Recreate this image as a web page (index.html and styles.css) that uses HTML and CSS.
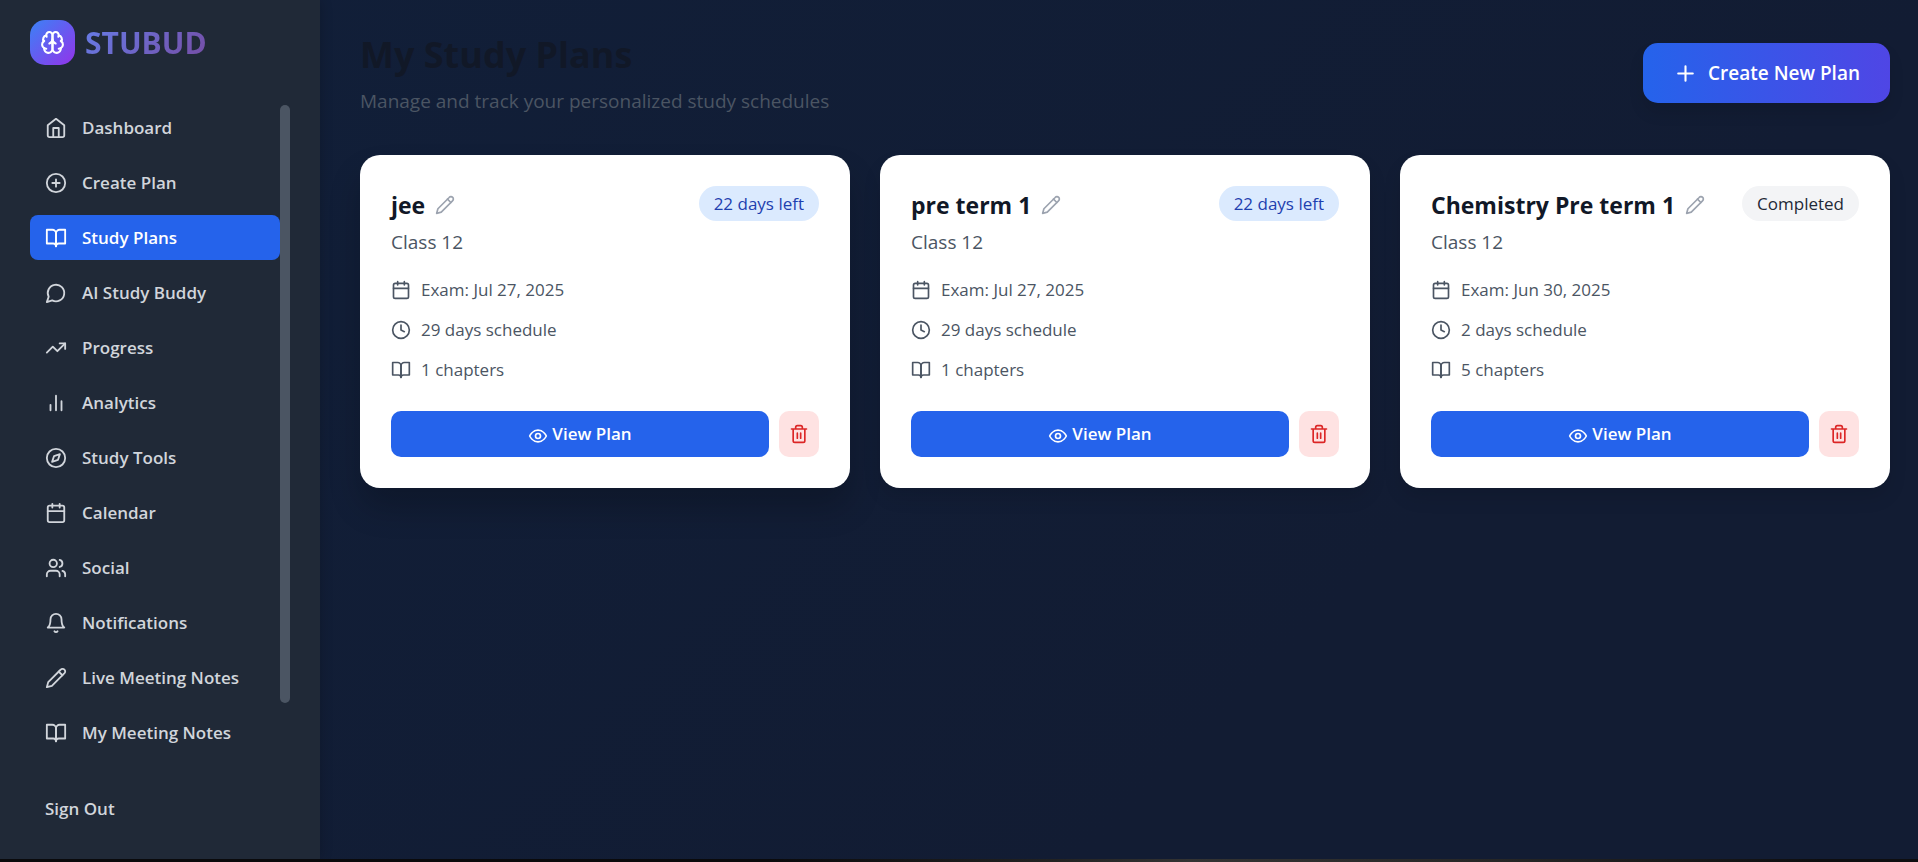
FILE: index.html
```html
<!DOCTYPE html>
<html lang="en">
<head>
<meta charset="utf-8">
<meta name="viewport" content="width=device-width, initial-scale=1">
<title>My Study Plans - STUBUD</title>
<link rel="stylesheet" href="styles.css">
</head>
<body>
<svg class="sprite" aria-hidden="true">
  <symbol id="i-brain" viewBox="0 0 24 24"><path d="M12 5a3 3 0 1 0-5.997.125 4 4 0 0 0-2.526 5.77 4 4 0 0 0 .556 6.588A4 4 0 1 0 12 18Z"/><path d="M12 5a3 3 0 1 1 5.997.125 4 4 0 0 1 2.526 5.77 4 4 0 0 1-.556 6.588A4 4 0 1 1 12 18Z"/><path d="M15 13a4.5 4.5 0 0 1-3-4 4.5 4.5 0 0 1-3 4"/><path d="M17.599 6.5a3 3 0 0 0 .399-1.375"/><path d="M6.003 5.125A3 3 0 0 0 6.401 6.5"/><path d="M3.477 10.896a4 4 0 0 1 .585-.396"/><path d="M19.938 10.5a4 4 0 0 1 .585.396"/><path d="M6 18a4 4 0 0 1-1.967-.516"/><path d="M19.967 17.484A4 4 0 0 1 18 18"/></symbol>
  <symbol id="i-home" viewBox="0 0 24 24"><path d="m3 9 9-7 9 7v11a2 2 0 0 1-2 2H5a2 2 0 0 1-2-2z"/><path d="M9 22V12h6v10"/></symbol>
  <symbol id="i-plus-circle" viewBox="0 0 24 24"><circle cx="12" cy="12" r="10"/><path d="M8 12h8M12 8v8"/></symbol>
  <symbol id="i-book" viewBox="0 0 24 24"><path d="M2 3h6a4 4 0 0 1 4 4v14a3 3 0 0 0-3-3H2z"/><path d="M22 3h-6a4 4 0 0 0-4 4v14a3 3 0 0 1 3-3h7z"/></symbol>
  <symbol id="i-message" viewBox="0 0 24 24"><path d="M7.9 20A9 9 0 1 0 4 16.1L2 22Z"/></symbol>
  <symbol id="i-trend" viewBox="0 0 24 24"><path d="m22 7-8.500 8.500-5-5L2 17"/><path d="M16 7h6v6"/></symbol>
  <symbol id="i-bars" viewBox="0 0 24 24"><path d="M18 20V10M12 20V4M6 20v-6"/></symbol>
  <symbol id="i-compass" viewBox="0 0 24 24"><circle cx="12" cy="12" r="10"/><path d="m16.240 7.760-2.120 6.360-6.360 2.120 2.120-6.360z"/></symbol>
  <symbol id="i-calendar" viewBox="0 0 24 24"><rect x="3" y="4" width="18" height="18" rx="2"/><path d="M8 2v4M16 2v4M3 10h18"/></symbol>
  <symbol id="i-users" viewBox="0 0 24 24"><path d="M16 21v-2a4 4 0 0 0-4-4H6a4 4 0 0 0-4 4v2"/><circle cx="9" cy="7" r="4"/><path d="M22 21v-2a4 4 0 0 0-3-3.870M16 3.130a4 4 0 0 1 0 7.750"/></symbol>
  <symbol id="i-bell" viewBox="0 0 24 24"><path d="M6 8a6 6 0 0 1 12 0c0 7 3 9 3 9H3s3-2 3-9"/><path d="M10.300 21a1.940 1.940 0 0 0 3.400 0"/></symbol>
  <symbol id="i-pencil" viewBox="0 0 24 24"><path d="M17 3a2.850 2.830 0 1 1 4 4L7.500 20.500 2 22l1.500-5.500Z"/><path d="m15 5 4 4"/></symbol>
  <symbol id="i-clock" viewBox="0 0 24 24"><circle cx="12" cy="12" r="10"/><path d="M12 6v6l4 2"/></symbol>
  <symbol id="i-eye" viewBox="0 0 24 24"><path d="M2 12s3.500-7 10-7 10 7 10 7-3.500 7-10 7-10-7-10-7Z"/><circle cx="12" cy="12" r="3"/></symbol>
  <symbol id="i-trash" viewBox="0 0 24 24"><path d="M3 6h18M19 6v14a2 2 0 0 1-2 2H7a2 2 0 0 1-2-2V6M8 6V4a2 2 0 0 1 2-2h4a2 2 0 0 1 2 2v2M10 11v6M14 11v6"/></symbol>
  <symbol id="i-plus" viewBox="0 0 24 24"><path d="M5 12h14M12 5v14"/></symbol>
</svg>
<div class="app">
  <aside class="sidebar">
    <div class="brand">
      <span class="brand-mark"><svg class="icon"><use href="#i-brain"/></svg></span>
      <span class="brand-name">STUBUD</span>
    </div>
    <div class="nav-scroll">
      <nav class="nav" aria-label="Main">
        <a class="nav-link" href="#"><svg class="icon"><use href="#i-home"/></svg>Dashboard</a>
        <a class="nav-link" href="#"><svg class="icon"><use href="#i-plus-circle"/></svg>Create Plan</a>
        <a class="nav-link active" href="#" aria-current="page"><svg class="icon"><use href="#i-book"/></svg>Study Plans</a>
        <a class="nav-link" href="#"><svg class="icon"><use href="#i-message"/></svg>AI Study Buddy</a>
        <a class="nav-link" href="#"><svg class="icon"><use href="#i-trend"/></svg>Progress</a>
        <a class="nav-link" href="#"><svg class="icon"><use href="#i-bars"/></svg>Analytics</a>
        <a class="nav-link" href="#"><svg class="icon"><use href="#i-compass"/></svg>Study Tools</a>
        <a class="nav-link" href="#"><svg class="icon"><use href="#i-calendar"/></svg>Calendar</a>
        <a class="nav-link" href="#"><svg class="icon"><use href="#i-users"/></svg>Social</a>
        <a class="nav-link" href="#"><svg class="icon"><use href="#i-bell"/></svg>Notifications</a>
        <a class="nav-link" href="#"><svg class="icon"><use href="#i-pencil"/></svg>Live Meeting Notes</a>
        <a class="nav-link" href="#"><svg class="icon"><use href="#i-book"/></svg>My Meeting Notes</a>
      </nav>
      <div class="scroll-track"><div class="scroll-thumb"></div></div>
    </div>
    <button class="sign-out" type="button">Sign Out</button>
  </aside>
  <main class="main">
    <header class="page-head">
      <div>
        <h1 class="page-title">My Study Plans</h1>
        <p class="page-sub">Manage and track your personalized study schedules</p>
      </div>
      <button class="create" type="button"><svg class="icon"><use href="#i-plus"/></svg>Create New Plan</button>
    </header>
    <section class="cards" aria-label="Study plans">
      <article class="card raised">
        <div class="card-head">
          <div class="card-name"><h2 class="card-title">jee</h2><button class="edit" type="button" aria-label="Rename jee"><svg class="icon"><use href="#i-pencil"/></svg></button></div>
          <span class="badge">22 days left</span>
        </div>
        <p class="grade">Class 12</p>
        <ul class="facts">
          <li class="fact"><svg class="icon"><use href="#i-calendar"/></svg>Exam: Jul 27, 2025</li>
          <li class="fact"><svg class="icon"><use href="#i-clock"/></svg>29 days schedule</li>
          <li class="fact"><svg class="icon"><use href="#i-book"/></svg>1 chapters</li>
        </ul>
        <div class="actions">
          <button class="view" type="button"><svg class="icon"><use href="#i-eye"/></svg>View Plan</button>
          <button class="delete" type="button" aria-label="Delete jee"><svg class="icon"><use href="#i-trash"/></svg></button>
        </div>
      </article>
      <article class="card">
        <div class="card-head">
          <div class="card-name"><h2 class="card-title">pre term 1</h2><button class="edit" type="button" aria-label="Rename pre term 1"><svg class="icon"><use href="#i-pencil"/></svg></button></div>
          <span class="badge">22 days left</span>
        </div>
        <p class="grade">Class 12</p>
        <ul class="facts">
          <li class="fact"><svg class="icon"><use href="#i-calendar"/></svg>Exam: Jul 27, 2025</li>
          <li class="fact"><svg class="icon"><use href="#i-clock"/></svg>29 days schedule</li>
          <li class="fact"><svg class="icon"><use href="#i-book"/></svg>1 chapters</li>
        </ul>
        <div class="actions">
          <button class="view" type="button"><svg class="icon"><use href="#i-eye"/></svg>View Plan</button>
          <button class="delete" type="button" aria-label="Delete pre term 1"><svg class="icon"><use href="#i-trash"/></svg></button>
        </div>
      </article>
      <article class="card">
        <div class="card-head">
          <div class="card-name"><h2 class="card-title">Chemistry Pre term 1</h2><button class="edit" type="button" aria-label="Rename Chemistry Pre term 1"><svg class="icon"><use href="#i-pencil"/></svg></button></div>
          <span class="badge done">Completed</span>
        </div>
        <p class="grade">Class 12</p>
        <ul class="facts">
          <li class="fact"><svg class="icon"><use href="#i-calendar"/></svg>Exam: Jun 30, 2025</li>
          <li class="fact"><svg class="icon"><use href="#i-clock"/></svg>2 days schedule</li>
          <li class="fact"><svg class="icon"><use href="#i-book"/></svg>5 chapters</li>
        </ul>
        <div class="actions">
          <button class="view" type="button"><svg class="icon"><use href="#i-eye"/></svg>View Plan</button>
          <button class="delete" type="button" aria-label="Delete Chemistry Pre term 1"><svg class="icon"><use href="#i-trash"/></svg></button>
        </div>
      </article>
    </section>
  </main>
</div>
<div class="edge"></div>
</body>
</html>
```
FILE: styles.css
```css
* { box-sizing: border-box; }
html, body { height: 100%; }
body {
  margin: 0;
  display: flex;
  flex-direction: column;
  font-family: "Open Sans", "Noto Sans", sans-serif;
  font-size: 17px;
  background: #0c0c0e;
}
h1, h2, p, ul { margin: 0; padding: 0; }
ul { list-style: none; }
button { font: inherit; border: 0; padding: 0; cursor: pointer; background: none; }
a { text-decoration: none; }
.sprite { position: absolute; width: 0; height: 0; }
.icon {
  flex: none;
  width: 20px;
  height: 20px;
  fill: none;
  stroke: currentColor;
  stroke-width: 2;
  stroke-linecap: round;
  stroke-linejoin: round;
}

.app { flex: 1; display: flex; min-height: 0; background: linear-gradient(135deg, #111f39, #121c33 70%); }
.edge { flex: none; height: 3px; background: linear-gradient(90deg, #0a0a0c 40%, #222 55%, #333 62%, #262626 78%, #0e0e10 95%); }

.sidebar {
  flex: none;
  display: flex;
  flex-direction: column;
  width: 320px;
  padding: 20px 30px 28px;
  background: #202937;
  color: #d1d5db;
  font-weight: 600;
  box-shadow: 0 0 12px rgba(0, 0, 0, .2);
}
.brand { display: flex; align-items: center; gap: 10px; margin-bottom: 40px; }
.brand-mark {
  display: grid;
  place-items: center;
  width: 45px;
  height: 45px;
  border-radius: 15px;
  color: #fff;
  background: linear-gradient(135deg, #3b82f6, #9333ea);
}
.brand-mark .icon { width: 25px; height: 25px; }
.brand-name {
  font-size: 30px;
  line-height: 45px;
  font-weight: 700;
  color: transparent;
  background: linear-gradient(135deg, #667eea, #764ba2);
  -webkit-background-clip: text;
  background-clip: text;
}
.nav-scroll { flex: 1; display: flex; min-height: 0; }
.nav { flex: 1; display: flex; flex-direction: column; gap: 10px; overflow: hidden; }
.nav-link {
  flex: none;
  display: flex;
  align-items: center;
  gap: 15px;
  height: 45px;
  padding: 0 15px;
  border-radius: 8px;
  color: inherit;
}
.nav-link .icon { width: 22px; height: 22px; }
.nav-link.active { background: #2563eb; color: #fff; }
.scroll-track { flex: none; width: 10px; }
.scroll-thumb { height: 90.5%; border-radius: 5px; background: #4b5563; }
.sign-out { margin-top: 20px; padding: 0 15px; line-height: 45px; text-align: left; color: inherit; }

.main { flex: 1; min-width: 0; padding: 30px 28px 30px 40px; overflow: hidden; }
.page-head { display: flex; align-items: center; justify-content: space-between; margin-bottom: 39px; }
.page-title { font-size: 36px; line-height: 50px; font-weight: 700; color: #111827; }
.page-sub { margin-top: 6px; font-size: 19px; line-height: 30px; color: #4b5563; }
.create {
  display: flex;
  align-items: center;
  gap: 10px;
  height: 60px;
  padding: 0 30px;
  border-radius: 15px;
  color: #fff;
  font-size: 19px;
  font-weight: 600;
  background: linear-gradient(90deg, #2563eb, #4f46e5);
  box-shadow: 0 10px 15px rgba(0, 0, 0, .1);
}
.create .icon { width: 25px; height: 25px; }

.cards { display: grid; grid-template-columns: repeat(3, 1fr); gap: 30px; }
.card {
  padding: 31px;
  border-radius: 20px;
  background: #fff;
  color: #4b5563;
  box-shadow: 0 10px 18px rgba(0, 0, 0, .1);
}
.card.raised { box-shadow: 0 20px 32px rgba(0, 0, 0, .2); }
.card-head { display: flex; align-items: flex-start; justify-content: space-between; height: 41px; }
.card-name { display: flex; align-items: center; gap: 10px; }
.card-title { font-size: 23px; line-height: 38px; font-weight: 700; color: #111827; }
.edit { display: flex; color: #9ca3af; }
.badge {
  padding: 0 15px;
  border-radius: 18px;
  line-height: 35px;
  font-weight: 500;
  color: #1e40af;
  background: #dbeafe;
}
.badge.done { color: #1f2937; background: #f3f4f6; }
.grade { font-size: 19px; line-height: 30px; }
.facts { display: grid; gap: 15px; margin: 20px 0 29px; }
.fact { display: flex; align-items: center; gap: 10px; line-height: 25px; }
.actions { display: flex; gap: 10px; }
.view {
  flex: 1;
  height: 46px;
  border-radius: 10px;
  color: #fff;
  font-weight: 600;
  background: #2563eb;
}
.view .icon { margin-right: 4px; vertical-align: middle; }
.delete { display: grid; place-items: center; width: 40px; border-radius: 10px; color: #dc2626; background: #fee2e2; }
```
